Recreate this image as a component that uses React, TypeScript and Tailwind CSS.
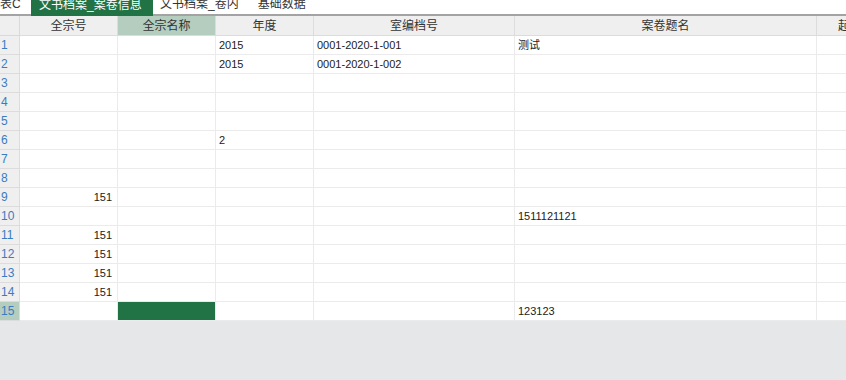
const cols = [
  { key: 'a', title: '全宗号', align: 'right' },
  { key: 'b', title: '全宗名称', align: 'left' },
  { key: 'c', title: '年度', align: 'left' },
  { key: 'd', title: '室编档号', align: 'left' },
  { key: 'e', title: '案卷题名', align: 'left' },
  { key: 'f', title: '起', align: 'left' },
]

const rows: Record<string, string>[] = [
  { c: '2015', d: '0001-2020-1-001', e: '测试' },
  { c: '2015', d: '0001-2020-1-002' },
  {},
  {},
  {},
  { c: '2' },
  {},
  {},
  { a: '151' },
  { e: '1511121121' },
  { a: '151' },
  { a: '151' },
  { a: '151' },
  { a: '151' },
  { e: '123123' },
]

const font = { fontFamily: '"Liberation Sans", "Noto Sans CJK SC", sans-serif' }

export default function App() {
  return (
    <div className="flex h-[380px] w-[846px] flex-col overflow-hidden bg-[#e6e7e9] text-[#222]" style={font}>
      {/* sheet tabs */}
      <div className="flex h-[16px] shrink-0 items-end border-b-2 border-[#a3a3a3] bg-white text-[12px] leading-none">
        <div className="w-[31px] overflow-hidden whitespace-nowrap pb-[4px] text-[#333]">表C</div>
        <div className="-mb-[2px] flex h-[16px] w-[122px] items-end bg-[#217346] pb-[5px] pl-[8px] text-white">
          文书档案_案卷信息
        </div>
        <div className="ml-[7px] pb-[4px] text-[#333]">文书档案_卷内</div>
        <div className="ml-[19px] pb-[4px] text-[#333]">基础数据</div>
      </div>

      {/* grid */}
      <div className="w-[846px] shrink-0 overflow-hidden bg-white">
        <div className="grid w-[872px] grid-cols-[20px_98px_98px_98px_201px_302px_55px]">
          <div className="h-[20px] border-b border-r border-[#d9d9d9] bg-[#efefef]" />
          {cols.map((c) => (
            <div
              key={c.key}
              className={
                'flex h-[20px] items-center justify-center overflow-hidden whitespace-nowrap border-b border-r border-[#dcdcdc] text-[12px] text-[#333] ' +
                (c.key === 'b' ? 'bg-[#b4cdbf]' : 'bg-[#efefef]')
              }
            >
              {c.title}
            </div>
          ))}

          {rows.map((r, i) => {
            const last = i === rows.length - 1
            return [
              <div
                key={'h' + i}
                className={
                  'flex h-[19px] items-center border-b border-r border-[#dcdcdc] pl-[1px] text-[12px] text-[#3a7cc0] ' +
                  (last ? 'bg-[#b4cdbf]' : 'bg-[#efefef]')
                }
              >
                {i + 1}
              </div>,
              ...cols.map((c) => (
                <div
                  key={c.key + i}
                  className={
                    'flex h-[19px] items-center overflow-hidden whitespace-nowrap border-b border-r border-[#ebebeb] text-[11px] ' +
                    (c.align === 'right' ? 'justify-end pr-[5px] ' : 'pl-[3px] ') +
                    (last && c.key === 'b' ? 'bg-[#217346]' : '')
                  }
                >
                  {r[c.key] ?? ''}
                </div>
              )),
            ]
          })}
        </div>
      </div>
    </div>
  )
}
